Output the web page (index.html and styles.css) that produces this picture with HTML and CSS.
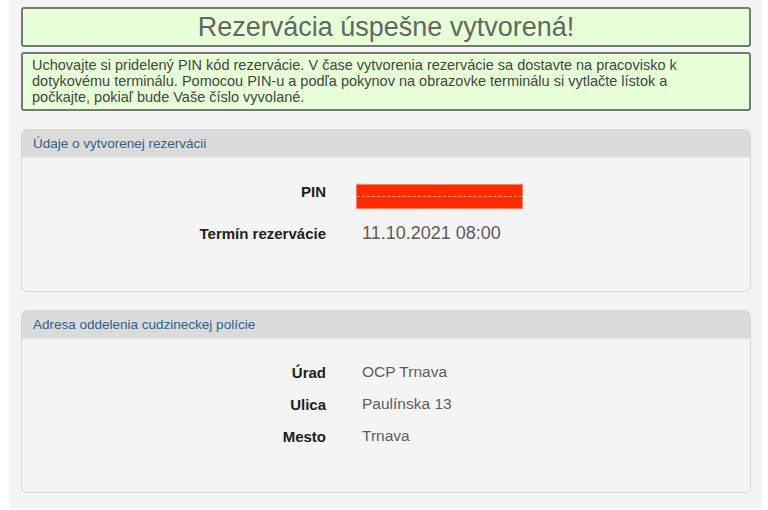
FILE: index.html
```html
<!DOCTYPE html>
<html lang="sk">
<head>
    <meta charset="UTF-8">
    <meta name="viewport" content="width=device-width, initial-scale=1.0">
    <title>Rezervácia úspešne vytvorená</title>
    <link rel="stylesheet" href="styles.css">
</head>
<body>
    <main class="page">
        <h1 class="notice notice-title">Rezervácia úspešne vytvorená!</h1>
        <p class="notice notice-text">
            Uchovajte si pridelený PIN kód rezervácie. V čase vytvorenia rezervácie sa dostavte na pracovisko k<br>
            dotykovému terminálu. Pomocou PIN-u a podľa pokynov na obrazovke terminálu si vytlačte lístok a<br>
            počkajte, pokiaľ bude Vaše číslo vyvolané.
        </p>

        <section class="panel">
            <h2 class="panel-head">Údaje o vytvorenej rezervácii</h2>
            <dl class="panel-body panel-body-booking">
                <div class="row row-pin">
                    <dt>PIN</dt>
                    <dd><span class="pin"></span></dd>
                </div>
                <div class="row">
                    <dt>Termín rezervácie</dt>
                    <dd class="date">11.10.2021 08:00</dd>
                </div>
            </dl>
        </section>

        <section class="panel">
            <h2 class="panel-head">Adresa oddelenia cudzineckej polície</h2>
            <dl class="panel-body">
                <div class="row">
                    <dt>Úrad</dt>
                    <dd>OCP Trnava</dd>
                </div>
                <div class="row">
                    <dt>Ulica</dt>
                    <dd>Paulínska 13</dd>
                </div>
                <div class="row">
                    <dt>Mesto</dt>
                    <dd>Trnava</dd>
                </div>
            </dl>
        </section>
    </main>
</body>
</html>
```

FILE: styles.css
```css
:root{
    --font: "Liberation Sans", Arial, Helvetica, sans-serif;
    --page-bg: hsl(0, 0%, 95.5%);
    --green: hsl(96, 100%, 92%);
    --border-dark: hsl(0, 0%, 47%);
    --head-bg: hsl(0, 0%, 86%);
    --panel-border: hsl(0, 0%, 84%);
    --blue: hsl(206, 52%, 36%);
    --text: hsl(0, 0%, 27%);
    --value: hsl(0, 0%, 36%);
    --red: hsl(10, 100%, 50%);
}
*,*::before,*::after{
    box-sizing: border-box;
    margin: 0;
    padding: 0;
}
body{
    font-family: var(--font);
    background-color: #fff;
    color: var(--text);
}
.page{
    margin: 0 6px 0 9px;
    height: 508px;
    padding: 7px 11px 0 12px;
    background-color: var(--page-bg);
}
.notice{
    background-color: var(--green);
    border: 2px solid var(--border-dark);
    border-radius: 3px;
}
.notice-title{
    height: 40px;
    font-size: 27px;
    font-weight: 400;
    line-height: 36px;
    text-align: center;
    color: hsl(0, 0%, 40%);
}
.notice-text{
    margin-top: 5px;
    height: 59px;
    padding: 3px 9px;
    font-size: 14.5px;
    line-height: 16px;
}
.panel{
    margin-top: 18px;
    border: 1px solid var(--panel-border);
    border-radius: 6px;
    overflow: hidden;
}
.panel-head{
    height: 28px;
    padding: 0 11px;
    background-color: var(--head-bg);
    border-bottom: 1px solid hsl(0, 0%, 90%);
    font-size: 13.5px;
    font-weight: 400;
    line-height: 28px;
    color: var(--blue);
}
.panel-body{
    padding: 17px 0 40px;
}
.panel-body-booking{
    padding-bottom: 42px;
}
.row{
    display: flex;
    align-items: center;
    height: 32px;
}
.row-pin{
    height: 42px;
    align-items: flex-start;
    padding-top: 8px;
}
.row dt{
    width: 304px;
    text-align: right;
    font-size: 15px;
    font-weight: 700;
    color: hsl(0, 0%, 13%);
}
.row dd{
    margin-left: 36px;
    font-size: 15.5px;
    color: var(--value);
}
.row dd.date{
    font-size: 18px;
}
.pin{
    position: relative;
    display: block;
    width: 167px;
    height: 25px;
    margin: 1px 0 0 -6px;
    background-color: var(--red);
    border: 1px solid hsl(10, 100%, 70%);
}
.pin::after{
    content: "";
    position: absolute;
    left: 0;
    right: 0;
    top: 11px;
    border-top: 1px dashed hsla(0, 0%, 100%, 0.55);
}
```
